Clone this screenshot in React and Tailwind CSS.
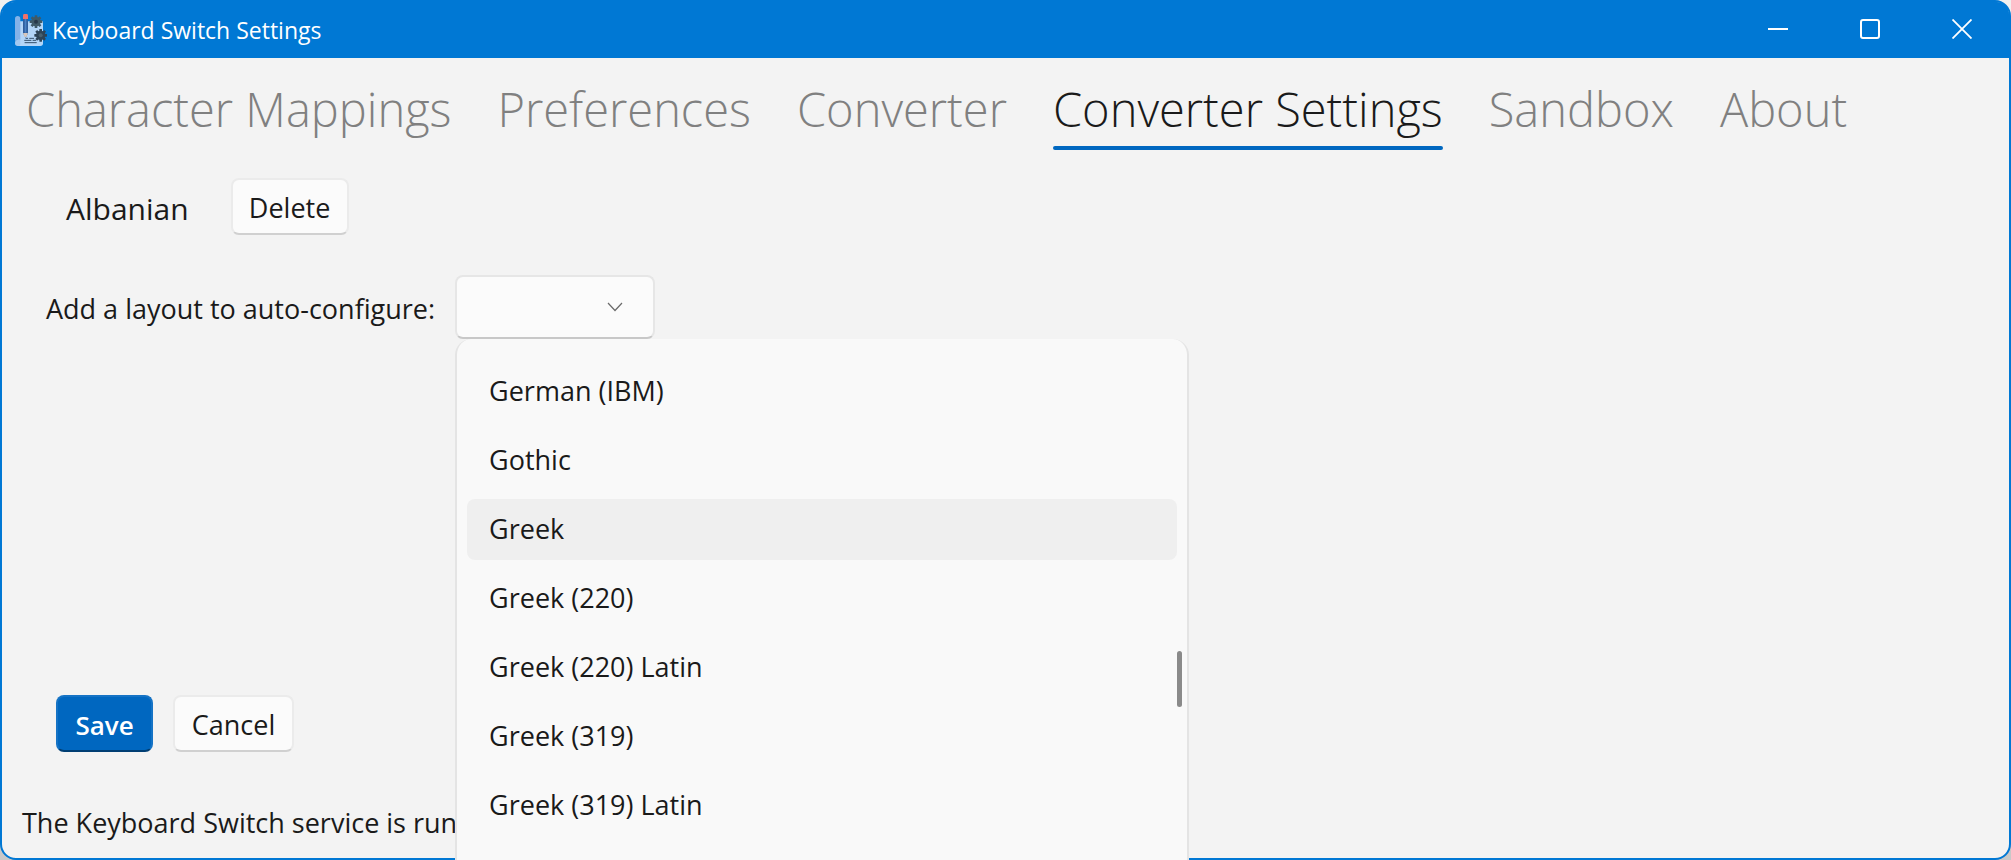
const tabs = ['Character Mappings', 'Preferences', 'Converter', 'Converter Settings', 'Sandbox', 'About'];
const layouts = [
  'German (IBM)',
  'Gothic',
  'Greek',
  'Greek (220)',
  'Greek (220) Latin',
  'Greek (319)',
  'Greek (319) Latin',
];

function Gear({ x, y, fill, hole }) {
  return (
    <g transform={`translate(${x} ${y})`}>
      <g fill={fill}>
        {[0, 45, 90, 135].map((a) => (
          <rect key={a} x="-4" y="-19" width="8" height="38" rx="1" transform={`rotate(${a})`} />
        ))}
        <circle r="14" />
      </g>
      <circle r="6" fill={hole} />
    </g>
  );
}

function Logo() {
  return (
    <svg viewBox="0 0 96 96" className="size-8 shrink-0" aria-hidden="true">
      <path d="M8 22H84V88a8 8 0 0 1-8 8H8Z" fill="#b3d6f8" />
      <path d="M0 14a8 8 0 0 1 16 0V77H8a8 8 0 0 0-8 8Z" fill="#84b2e8" />
      <path d="M0 86a9 9 0 0 1 9-9h7v10a8 8 0 0 1-8 9H8a8 8 0 0 1-8-8Z" fill="#a3c8f0" />
      <path d="M24 14H39V58L32 71 24 58Z" fill="#2f5f9e" />
      <path d="M29 14H34V56H29Z" fill="#4a83c4" />
      <path d="M24 57H39L34 69H29Z" fill="#d8c8bc" />
      <path d="M24 15V6a7 7 0 0 1 15 0V15Z" fill="#f0716a" />
      <g stroke="#34506b" strokeWidth="3" strokeLinecap="round">
        <path d="M33 73H38M44 73H56M29 79H48M54 79H62M30 86H64" />
      </g>
      <Gear x="63" y="23" fill="#3f5a68" hole="#27394a" />
      <Gear x="77" y="64" fill="#2d4456" hole="#48606e" />
    </svg>
  );
}

const plainButton =
  'h-[57px] rounded-lg border-2 border-[#ebebeb] border-b-[#d0d0d0] bg-[#fbfbfb] pt-[3px] text-center text-[27px] leading-9';

export default function App() {
  return (
    <div className="h-screen overflow-hidden bg-linear-to-b from-[#f0f0f0] to-[#c8c8c8] font-['Open_Sans','Noto_Sans',sans-serif] text-[#1a1a1a]">
      <div className="flex h-full flex-col rounded-2xl border-2 border-[#0078d4] bg-[#f3f3f3]">
        <header className="flex h-14 shrink-0 items-center rounded-t-xl bg-[#0078d4] pr-px pl-[13px] text-white">
          <Logo />
          <h1 className="ml-[5px] flex-1 text-[23px] leading-8">Keyboard Switch Settings</h1>
          <button aria-label="Minimize" className="grid h-full w-[92px] place-items-center pb-0.5">
            <svg viewBox="0 0 20 20" className="size-5" stroke="white" strokeWidth="2"><path d="M0 10H20" /></svg>
          </button>
          <button aria-label="Maximize" className="grid h-full w-[92px] place-items-center pb-0.5">
            <svg viewBox="0 0 20 20" className="size-5" fill="none" stroke="white" strokeWidth="2"><rect x="1" y="1" width="18" height="18" rx="2" /></svg>
          </button>
          <button aria-label="Close" className="grid h-full w-[92px] place-items-center pb-0.5">
            <svg viewBox="0 0 20 20" className="size-5" stroke="white" strokeWidth="1.8"><path d="M0.5 0.5 19.5 19.5M19.5 0.5 0.5 19.5" /></svg>
          </button>
        </header>

        <nav role="tablist" className="flex gap-[46px] pt-3.5 pl-6">
          {tabs.map((tab) => {
            const active = tab === 'Converter Settings';
            return (
              <button
                key={tab}
                role="tab"
                aria-selected={active}
                className={
                  active
                    ? 'text-[47px] leading-[74px] font-light whitespace-nowrap'
                    : 'text-[47px] leading-[74px] font-light whitespace-nowrap text-[#808080]'
                }
              >
                {tab}
                <span className={active ? 'block h-1 rounded-full bg-[#0067c0]' : 'block h-1'} />
              </button>
            );
          })}
        </nav>

        <main className="flex flex-1 flex-col">
          <div className="mt-7 flex items-center gap-[42px] pl-16">
            <span className="pt-1 text-[30px] leading-10">Albanian</span>
            <button className={`${plainButton} w-[118px]`}>Delete</button>
          </div>

          <div className="mt-10 flex items-center gap-5 pl-11">
            <label htmlFor="layout" className="pt-1 text-[27px] leading-9 whitespace-nowrap">
              Add a layout to auto-configure:
            </label>
            <div className="relative">
              <select
                id="layout"
                defaultValue=""
                className="block h-16 w-[200px] appearance-none rounded-lg border-2 border-[#e6e6e6] border-b-[#c8c8c8] bg-[#fbfbfb] text-[27px]"
              >
                <option value="" />
              </select>
              <svg viewBox="0 0 16 10" className="pointer-events-none absolute top-[27px] right-8 h-2.5 w-4" fill="none" stroke="#6a6a6a" strokeWidth="1.2">
                <path d="M1 1 8 8.5 15 1" />
              </svg>
              <ul
                role="listbox"
                aria-label="Layouts"
                className="absolute top-full left-0 flex h-[560px] w-[734px] flex-col gap-2 rounded-2xl border-x-2 border-[#e4e4e4] bg-[#f9f9f9] px-2.5 pt-[22px]"
              >
                {layouts.map((name) => (
                  <li
                    key={name}
                    role="option"
                    aria-selected={name === 'Greek'}
                    className={
                      name === 'Greek'
                        ? 'rounded-lg bg-[#efefef] px-[22px] pt-[11px] pb-[13px] text-[27px] leading-[37px]'
                        : 'rounded-lg px-[22px] pt-[11px] pb-[13px] text-[27px] leading-[37px]'
                    }
                  >
                    {name}
                  </li>
                ))}
                <li role="presentation" className="absolute top-[312px] right-[5px] h-14 w-[5px] rounded-full bg-[#8a8a8a]" />
              </ul>
            </div>
          </div>

          <div className="mt-auto flex gap-5 pl-[54px]">
            <button className="h-[57px] w-[97px] rounded-lg border-2 border-[#1573c5] border-b-[#003e73] bg-[#0067c0] pt-[3px] text-[26px] leading-9 font-semibold text-white">
              Save
            </button>
            <button className={`${plainButton} w-[121px]`}>Cancel</button>
          </div>
        </main>

        <footer className="px-5 pt-[51px] pb-4 text-[27px] leading-[39px]">The Keyboard Switch service is running.</footer>
      </div>
    </div>
  );
}
